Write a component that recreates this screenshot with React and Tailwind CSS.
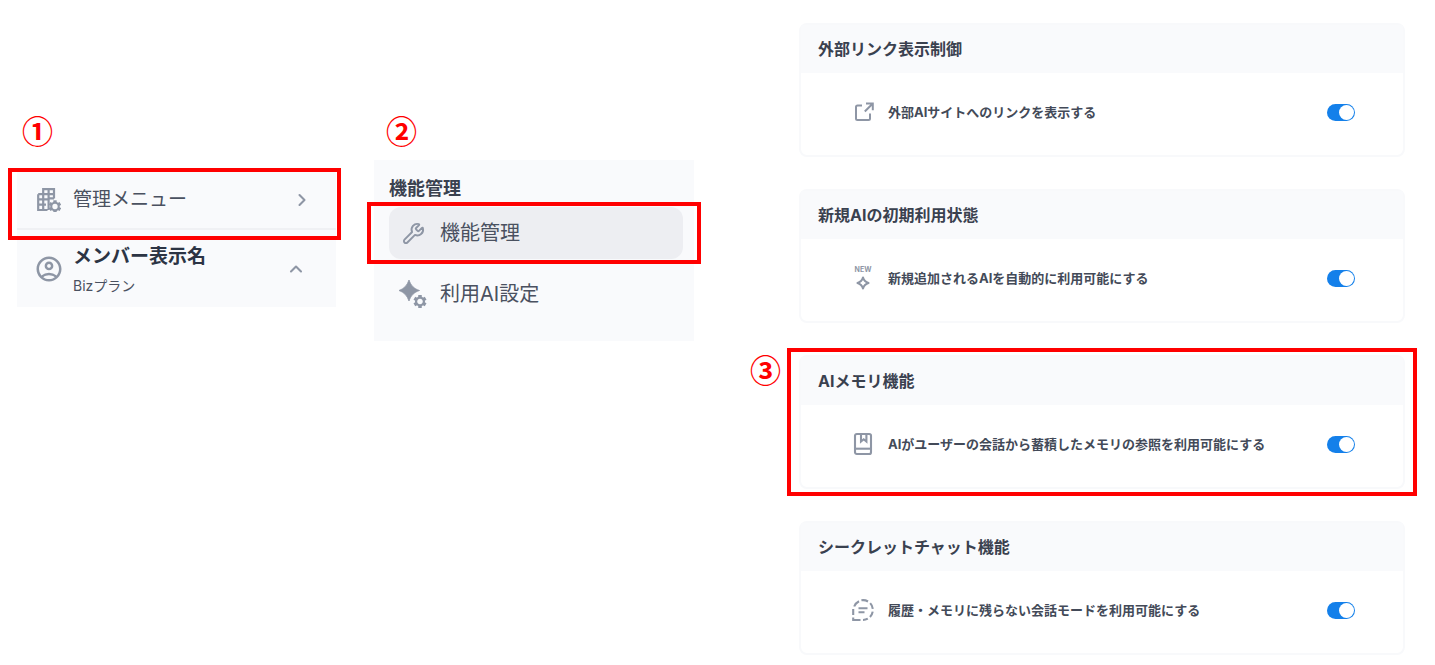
import React from "react";
import { ChevronRight, ChevronUp, Wrench } from "lucide-react";
import { MdOutlineAccountCircle } from "react-icons/md";

const GEAR_TEETH = [0, 60, 120, 180, 240, 300];

function Gear({ cx, cy, r }) {
  return (
    <g transform={`translate(${cx} ${cy})`}>
      {GEAR_TEETH.map((angle) => (
        <rect
          key={angle}
          x={-r * 0.27}
          y={-r}
          width={r * 0.54}
          height={r * 0.4}
          fill="currentColor"
          transform={`rotate(${angle})`}
        />
      ))}
      <circle r={r * 0.6} fill="none" stroke="currentColor" strokeWidth={r * 0.34} />
    </g>
  );
}

function BuildingGearIcon() {
  return (
    <svg viewBox="0 0 24 24" className="size-6 shrink-0" aria-hidden="true">
      <path
        d="M1.2 6.2H6.2V1.2H17V10.5M1.2 6.2V22H10.5M6.2 6.2V22M11.6 1.2V22M1.2 11.4H11.6M1.2 16.6H9M6.2 6.2H17M11.6 10.4H17"
        fill="none"
        stroke="currentColor"
        strokeWidth="2.2"
      />
      <Gear cx={18} cy={18.5} r={6.2} />
    </svg>
  );
}

function SparkGearIcon() {
  return (
    <svg viewBox="0 0 28 28" className="size-7 shrink-0" aria-hidden="true">
      <path
        d="M10 0C11.8 5.2 14.8 8.7 20.5 10.5C14.8 12.3 11.8 15.8 10 21C8.2 15.8 5.2 12.3 0 10.5C5.2 8.7 8.2 5.2 10 0Z"
        fill="currentColor"
        stroke="currentColor"
        strokeWidth="0.8"
      />
      <Gear cx={21} cy={21.5} r={6.5} />
    </svg>
  );
}

function ExternalIcon() {
  return (
    <svg viewBox="0 0 22 22" className="size-[22px]" fill="none" stroke="currentColor" strokeWidth="2" aria-hidden="true">
      <path d="M10 4.5H5.5Q4 4.5 4 6V17.5Q4 19 5.5 19H16.5Q18 19 18 17.5V12.5" />
      <path d="M14 2.5H20.8V9.3M20.3 3L12.8 10.500" />
    </svg>
  );
}

function NewSparkIcon() {
  return (
    <svg viewBox="0 0 22 26" className="h-[26px] w-[22px]" aria-hidden="true">
      <text
        x="11"
        y="7"
        textAnchor="middle"
        fontSize="7"
        fontWeight="700"
        fontFamily="Inter, sans-serif"
        fill="currentColor"
      >
        NEW
      </text>
      <path
        d="M11 12.500C12 15.800 13.200 17 16.500 18C13.200 19 12 20.200 11 23.500C10 20.200 8.800 19 5.500 18C8.800 17 10 15.800 11 12.500Z"
        fill="none"
        stroke="currentColor"
        strokeWidth="2.1"
        strokeLinejoin="round"
      />
    </svg>
  );
}

function BookIcon() {
  return (
    <svg viewBox="0 0 22 24" className="h-6 w-[22px]" fill="none" stroke="currentColor" strokeWidth="2.1" aria-hidden="true">
      <rect x="3" y="2" width="16" height="20" rx="1.8" />
      <path d="M3 16.7H19" />
      <path d="M9 2V9.5L11.7 7.3L14.4 9.5V2" />
    </svg>
  );
}

function SecretChatIcon() {
  return (
    <svg viewBox="0 0 24 24" className="size-6" fill="none" stroke="currentColor" strokeWidth="2.1" aria-hidden="true">
      <path d="M3.2 8.5A9.800 9.800 0 0 1 8 3.2M10.4 2.3A9.8 9.8 0 0 1 17 3.5M19.2 5.1A9.8 9.8 0 0 1 21.8 10.8M21.7 13.7A9.8 9.8 0 0 1 19 19M16.8 20.7A9.8 9.8 0 0 1 12 22M9.5 22H2.2V19.5M2.2 17V11" />
      <path d="M7.5 10.2H16.5M7.5 14.2H13.5" />
    </svg>
  );
}

const FEATURES = [
  { id: "external", title: "外部リンク表示制御", label: "外部AIサイトへのリンクを表示する", Icon: ExternalIcon },
  { id: "initial", title: "新規AIの初期利用状態", label: "新規追加されるAIを自動的に利用可能にする", Icon: NewSparkIcon },
  {
    id: "memory",
    title: "AIメモリ機能",
    label: "AIがユーザーの会話から蓄積したメモリの参照を利用可能にする",
    Icon: BookIcon,
    step: "③",
  },
  { id: "secret", title: "シークレットチャット機能", label: "履歴・メモリに残らない会話モードを利用可能にする", Icon: SecretChatIcon },
];

function Step({ children, className }) {
  return (
    <span
      className={`block h-[29px] w-fit font-['Noto_Sans_CJK_JP',sans-serif] text-[31px] leading-6 font-bold text-[#ff0000] ${className}`}
    >
      {children}
    </span>
  );
}

function Highlight({ className }) {
  return <div className={`pointer-events-none absolute border-4 border-[#ff0000] ${className}`} />;
}

function FeatureCard({ id, title, label, Icon, step }) {
  return (
    <section className="relative rounded-lg border-2 border-[#f8f9fb]">
      <h2 className="bg-[#f9fafc] px-[17px] py-3 text-base leading-6 font-bold text-[#3a414f]">{title}</h2>
      <div className="flex items-center pt-[23px] pr-12 pb-[27px] pl-[50px]">
        <span className="flex h-8 w-6 shrink-0 items-center justify-center text-[#8e96a5]">
          <Icon />
        </span>
        <label htmlFor={id} className="ml-[13px] grow text-[13px] leading-5 font-bold text-[#434a58]">
          {label}
        </label>
        <input
          id={id}
          type="checkbox"
          role="switch"
          defaultChecked
          className="flex h-[17px] w-7 shrink-0 appearance-none items-center rounded-full bg-[#c6ccd6] p-px before:size-[15px] before:rounded-full before:bg-white checked:justify-end checked:bg-[#1480ea]"
        />
      </div>
      {step && (
        <>
          <Step className="absolute top-0 -left-[51px]">{step}</Step>
          <Highlight className="-inset-x-[14px] -inset-y-[9px]" />
        </>
      )}
    </section>
  );
}

export default function App() {
  return (
    <main className="grid grid-cols-[319fr_320fr_673fr] items-start gap-x-[38px] bg-white pr-[30px] pl-[17px] font-[Inter,'Noto_Sans_CJK_JP',sans-serif] text-[#4a5160]">
      <div className="pt-[118px]">
        <Step className="ml-[5px]">①</Step>
        <nav className="relative mt-[25px] bg-[#f9fafc]">
          <button type="button" className="flex w-full items-center border-b-2 border-[#f0f1f4] py-4 pr-6 pl-5 text-left">
            <span className="text-[#8e96a5]">
              <BuildingGearIcon />
            </span>
            <span className="ml-3 grow text-[19px] leading-6">管理メニュー</span>
            <ChevronRight className="size-5 text-[#8e96a5]" strokeWidth={2.5} />
          </button>
          <button type="button" className="flex w-full items-center py-[11px] pr-[30px] pl-[17px] text-left">
            <MdOutlineAccountCircle className="size-[30px] shrink-0 text-[#8e96a5]" />
            <span className="ml-[9px] flex grow flex-col gap-[7px] pt-1">
              <span className="text-[19px] leading-6 font-bold text-[#2c3444]">メンバー表示名</span>
              <span className="text-sm leading-5">Bizプラン</span>
            </span>
            <ChevronUp className="size-5 text-[#8e96a5]" strokeWidth={2.5} />
          </button>
          <Highlight className="-top-1 -right-[5px] -left-[9px] h-[72px]" />
        </nav>
      </div>

      <div className="pt-[118px]">
        <Step className="ml-3">②</Step>
        <nav className="mt-[13px] bg-[#f9fafc] px-[15px] pt-[17px] pb-[21px]">
          <h2 className="text-lg leading-6 font-bold text-[#3a414f]">機能管理</h2>
          <ul className="mt-[6px] -mr-1 flex flex-col gap-[9px]">
            <li className="relative">
              <a href="#features" className="flex items-center rounded-xl bg-[#edeef2] py-3 pl-[10px]">
                <span className="flex w-7 justify-center text-[#8e96a5]">
                  <Wrench className="size-[23px]" strokeWidth={2} />
                </span>
                <span className="ml-[13px] text-xl leading-7">機能管理</span>
              </a>
              <Highlight className="-inset-y-[5px] -right-[18px] -left-[22px]" />
            </li>
            <li>
              <a href="#ai" className="flex items-center py-3 pl-[10px]">
                <span className="flex w-7 text-[#8e96a5]">
                  <SparkGearIcon />
                </span>
                <span className="ml-[13px] text-xl leading-7">利用AI設定</span>
              </a>
            </li>
          </ul>
        </nav>
      </div>

      <div className="flex flex-col gap-8 pt-[23px] pb-[10px] pl-[67px]">
        {FEATURES.map((feature) => (
          <FeatureCard key={feature.id} {...feature} />
        ))}
      </div>
    </main>
  );
}
